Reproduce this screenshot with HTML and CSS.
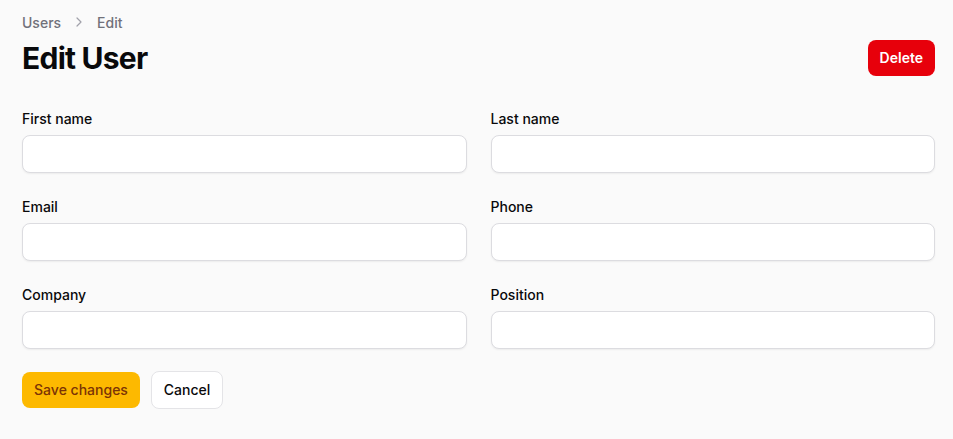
FILE: index.html
```html
<!DOCTYPE html>
<html lang="en">
<head>
<meta charset="utf-8">
<title>Edit User</title>
<link rel="stylesheet" href="styles.css">
</head>
<body>
<main class="page">
  <nav class="breadcrumbs">
    <span class="crumb">Users</span>
    <svg class="chev" viewBox="0 0 20 20" width="16" height="16" aria-hidden="true"><path d="M7.5 5l5 5-5 5" fill="none" stroke="currentColor" stroke-width="1.5" stroke-linecap="round" stroke-linejoin="round"/></svg>
    <span class="crumb">Edit</span>
  </nav>
  <header class="header">
    <h1 class="title">Edit User</h1>
    <button class="btn btn-danger">Delete</button>
  </header>
  <form class="form">
    <div class="grid">
      <label class="field"><span class="label">First name</span><input class="input" type="text"></label>
      <label class="field"><span class="label">Last name</span><input class="input" type="text"></label>
      <label class="field"><span class="label">Email</span><input class="input" type="email"></label>
      <label class="field"><span class="label">Phone</span><input class="input" type="text"></label>
      <label class="field"><span class="label">Company</span><input class="input" type="text"></label>
      <label class="field"><span class="label">Position</span><input class="input" type="text"></label>
    </div>
    <div class="actions">
      <button type="button" class="btn btn-primary">Save changes</button>
      <button type="button" class="btn btn-secondary">Cancel</button>
    </div>
  </form>
</main>
</body>
</html>
```
FILE: styles.css
```css
* { box-sizing: border-box; }
html, body { margin: 0; padding: 0; background: #fafafa; }
body { font-family: Inter, "Noto Sans", sans-serif; color: #09090b; }
.page { padding: 12px 18px 0 22px; }
.breadcrumbs { display: flex; align-items: center; gap: 10px; height: 20px; font-size: 14px; font-weight: 500; color: #71717a; }
.chev { color: #a1a1aa; width: 16px; height: 16px; }
.header { display: flex; justify-content: space-between; align-items: center; margin-top: 8px; }
.title { margin: 0; font-size: 30px; line-height: 36px; font-weight: 700; letter-spacing: -0.75px; color: #09090b; }
.btn { font-family: inherit; font-size: 14px; font-weight: 600; line-height: 20px; border-radius: 8px; padding: 8px 12px; border: 0; cursor: pointer; }
.btn-danger { background: #e7000b; color: #fff; height: 36px; }
.form { margin-top: 33px; }
.grid { display: grid; grid-template-columns: 1fr 1fr; column-gap: 24px; row-gap: 24px; }
.field { display: flex; flex-direction: column; gap: 6px; }
.label { font-size: 14px; line-height: 20px; font-weight: 500; color: #09090b; }
.input { height: 38px; width: 100%; background: #fff; border: 1px solid #dcdce0; border-radius: 8px; box-shadow: 0 1px 2px rgba(0,0,0,0.06); font: inherit; font-size: 14px; padding: 0 12px; }
.actions { display: flex; gap: 11px; margin-top: 23px; }
.btn-primary { background: #fdb900; color: #7b3306; font-weight: 500; height: 36px; width: 118px; padding: 8px 0; }
.btn-secondary { background: #fff; color: #09090b; border: 1px solid #e4e4e7; font-weight: 500; height: 38px; width: 72px; padding: 0; margin-top: -1px; }
```
